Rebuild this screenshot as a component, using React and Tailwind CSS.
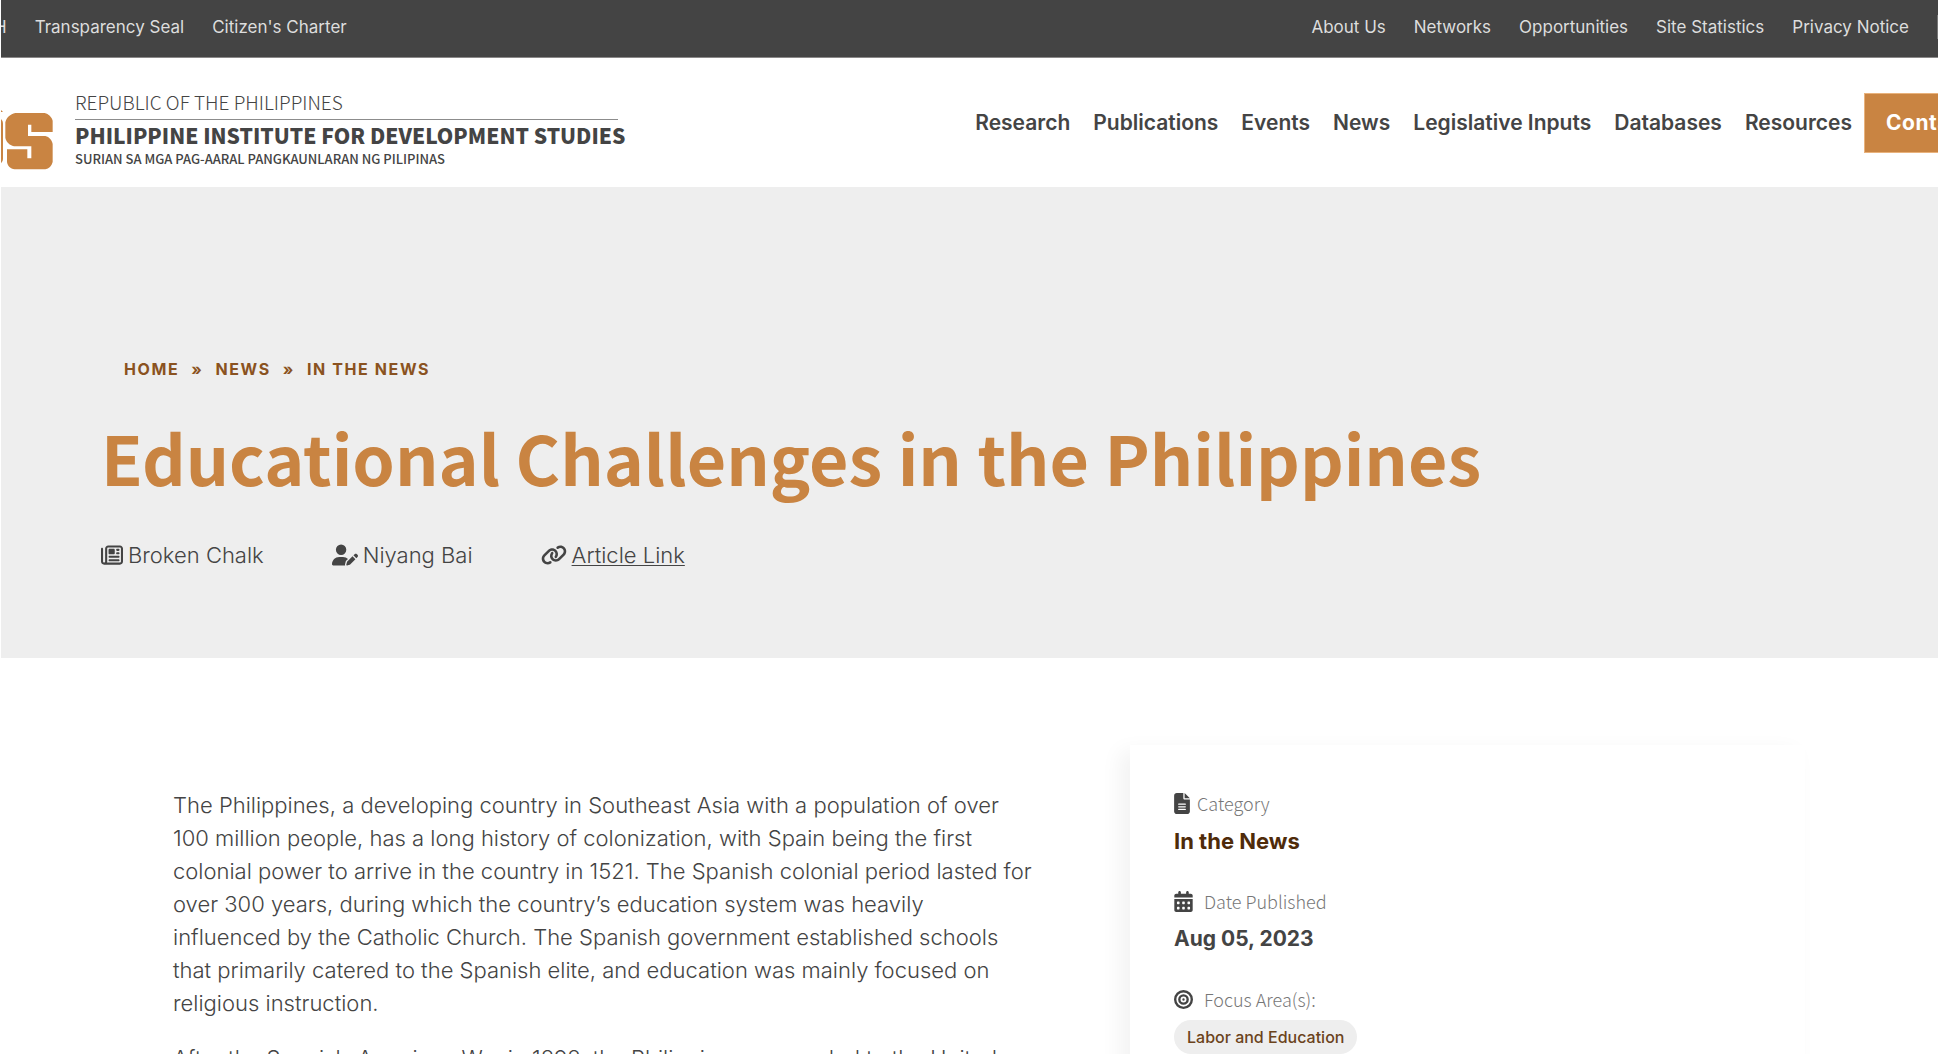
import { FaRegNewspaper, FaUserPen, FaLink, FaFileLines, FaCalendarDays, FaBullseye } from "react-icons/fa6";

const leftLinks = ["Transparency Seal", "Citizen's Charter"];
const rightLinks = ["About Us", "Networks", "Opportunities", "Site Statistics", "Privacy Notice"];
const navLinks = ["Research", "Publications", "Events", "News", "Legislative Inputs", "Databases", "Resources"];

function TopBar() {
  return (
    <div className="flex h-[58px] items-center justify-between overflow-hidden border-b border-[#8a8888] bg-[#444444] pb-[3px] text-[17px] leading-6 text-[#dddddd]">
      <nav aria-label="Transparency" className="flex gap-[28px]">
        <a href="#dash" className="-ml-[7px] whitespace-nowrap">H</a>
        {leftLinks.map((t) => (
          <a key={t} href="#top" className="whitespace-nowrap">{t}</a>
        ))}
      </nav>
      <nav aria-label="Site" className="flex items-center gap-[28px]">
        {rightLinks.map((t) => (
          <a key={t} href="#top" className="whitespace-nowrap">{t}</a>
        ))}
        <span className="h-6 w-px bg-[#777777]" />
      </nav>
    </div>
  );
}

function Logo() {
  return (
    <a href="#home" aria-label="Philippine Institute for Development Studies" className="flex pt-[26px] text-[#444444]">
      <svg viewBox="3 60 156 180" className="mt-[26px] h-[60px] w-[52px] shrink-0" fill="#c98442">
        <path d="M3 60L9 66H3Z" />
        <path d="M3 87Q9 92 9 100V207Q9 215 3 220Z" />
        <path d="M46 69H134C146 72 155 81 158 92V126H94V104H84V138H136C148 141 156 150 158 162V216C155 228 147 236 136 238H44C31 236 23 228 21 216V178H82V205H94V169H42C28 165 18 155 16 143V97C19 83 31 72 46 69Z" />
      </svg>
      <span className="ml-[22px] flex flex-col font-[Noto_Sans_CJK_JP,sans-serif] whitespace-nowrap">
        <span className="w-[543px] border-b border-[#8c8c8c] text-[19px] leading-[35px] font-light">REPUBLIC OF THE PHILIPPINES</span>
        <span className="text-[21px] leading-[30px] font-black">PHILIPPINE INSTITUTE FOR DEVELOPMENT STUDIES</span>
        <span className="text-[13px] leading-[17px] font-medium">SURIAN SA MGA PAG-AARAL PANGKAUNLARAN NG PILIPINAS</span>
      </span>
    </a>
  );
}

function Header() {
  return (
    <header className="flex h-[129px] items-start justify-between overflow-hidden bg-white">
      <Logo />
      <nav aria-label="Main" className="flex items-center gap-[23px] pt-[35px] text-[21px] font-semibold text-[#444444]">
        {navLinks.map((t) => (
          <a key={t} href="#nav" className="whitespace-nowrap">{t}</a>
        ))}
        <a href="#contact" className="-ml-[11px] flex h-[60px] w-[74px] items-center overflow-hidden border border-r-0 border-[#e9b27c] bg-[#c98442] pl-[21px] font-bold tracking-wide whitespace-nowrap text-white">
          Contact Us
        </a>
      </nav>
    </header>
  );
}

function Hero() {
  return (
    <section className="h-[471px] bg-[#eeeeee] pt-[168px] pl-[100px]">
      <nav aria-label="Breadcrumb" className="ml-[23px] flex gap-[12px] text-[16px] leading-7 font-bold tracking-widest text-[#8a5220]">
        <a href="#home">HOME</a><span>»</span><a href="#news">NEWS</a><span>»</span><a href="#itn">IN THE NEWS</a>
      </nav>
      <h1 className="mt-[29px] font-[Noto_Sans_CJK_JP,sans-serif] text-[68px] leading-[90px] font-bold whitespace-nowrap text-[#c98442]">
        Educational Challenges in the Philippines
      </h1>
      <div className="mt-[37px] flex gap-[68px] text-[22px] leading-8 font-light text-[#444444]">
        <span className="flex items-center gap-[5px]"><FaRegNewspaper size={22} />Broken Chalk</span>
        <span className="flex items-center gap-[5px]"><FaUserPen size={26} />Niyang Bai</span>
        <span className="flex items-center gap-[5px]"><FaLink size={26} /><a href="#article" className="underline decoration-1 underline-offset-2">Article Link</a></span>
      </div>
    </section>
  );
}

const paragraphLines = [
  "The Philippines, a developing country in Southeast Asia with a population of over",
  "100 million people, has a long history of colonization, with Spain being the first",
  "colonial power to arrive in the country in 1521. The Spanish colonial period lasted for",
  "over 300 years, during which the country’s education system was heavily",
  "influenced by the Catholic Church. The Spanish government established schools",
  "that primarily catered to the Spanish elite, and education was mainly focused on",
  "religious instruction.",
];

function Article() {
  return (
    <article className="text-[22px] leading-[33px] font-light text-[#444444]">
      <p className="mb-[22px] whitespace-nowrap">
        {paragraphLines.map((l) => (
          <span key={l} className="block">{l}</span>
        ))}
      </p>
      <p className="whitespace-nowrap">After the Spanish-American War in 1898, the Philippines was ceded to the United</p>
    </article>
  );
}

function Field({ icon, label, children }) {
  return (
    <div>
      <dt className="flex h-[30px] items-center font-[Noto_Sans_CJK_JP,sans-serif] text-[18px] font-light text-[#777777]">
        <span className="text-[#444444]">{icon}</span>
        {label}
      </dt>
      <dd>{children}</dd>
    </div>
  );
}

function Sidebar() {
  return (
    <aside className="w-[675px] bg-white px-[44px] pt-[43px] pb-20 shadow-[-10px_6px_20px_rgba(0,0,0,0.05)]">
      <dl className="flex flex-col gap-[22px]">
        <Field icon={<FaFileLines className="mr-[7px] h-[21px] w-[16px]" />} label="Category">
          <a href="#itn" className="block text-[22px] leading-[46px] font-bold text-[#4f2b0a]">In the News</a>
        </Field>
        <Field icon={<FaCalendarDays className="mr-[11px] h-[21px] w-[19px]" />} label="Date Published">
          <span className="block text-[21px] leading-[46px] font-bold text-[#444444]">Aug 05, 2023</span>
        </Field>
        <Field icon={<FaBullseye className="mr-[11px] h-[19px] w-[19px]" />} label="Focus Area(s):">
          <a href="#labor" className="mt-[6px] inline-block rounded-full bg-[#eeeeee] px-[13px] text-[16px] leading-[34px] font-medium text-[#6b431c]">Labor and Education</a>
        </Field>
      </dl>
    </aside>
  );
}

export default function App() {
  return (
    <div className="h-screen overflow-hidden bg-white pl-px font-[Inter,sans-serif]">
      <TopBar />
      <Header />
      <Hero />
      <main className="grid grid-cols-[minmax(0,1fr)_808px] pl-[172px]">
        <div className="pt-[131px]"><Article /></div>
        <div className="pt-[87px]"><Sidebar /></div>
      </main>
    </div>
  );
}
